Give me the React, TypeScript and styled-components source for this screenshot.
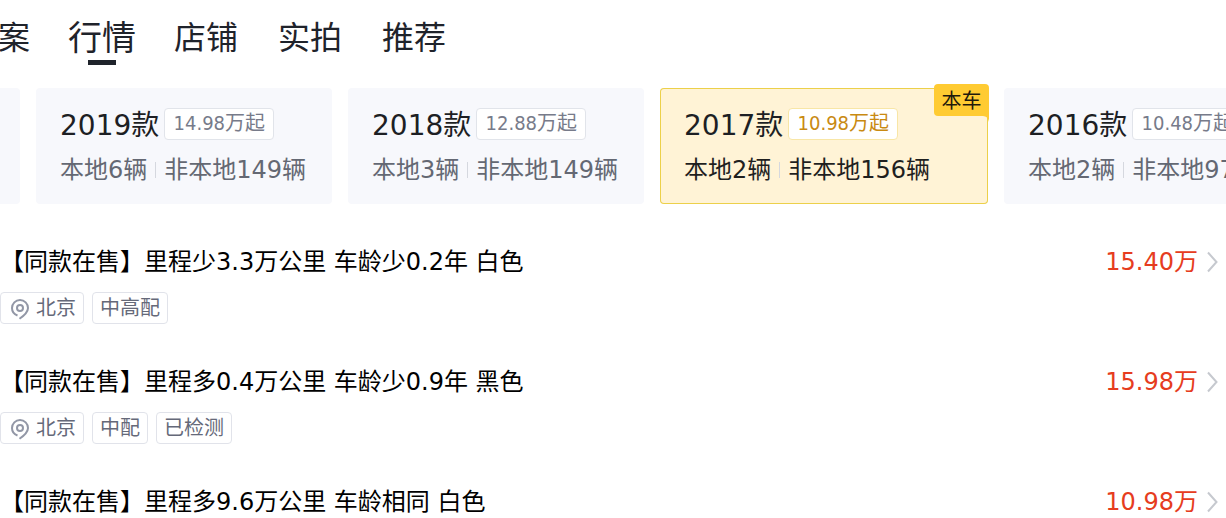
import React from "react";
import styled, { createGlobalStyle } from "styled-components";

const GlobalStyle = createGlobalStyle`
  * { box-sizing: border-box; }
  body {
    margin: 0;
    background: #fff;
    color: #000;
    font-family: "DejaVu Sans", "Noto Sans CJK SC", sans-serif;
    overflow: hidden;
  }
  button { font-family: inherit; border: 0; background: none; padding: 0; cursor: pointer; }
`;

const Page = styled.main`
  width: 100%;
  overflow: hidden;
`;

const Tabs = styled.nav`
  display: flex;
  gap: 40px;
  height: 84px;
  padding-top: 16px;
  margin-left: -2px;
`;

const Tab = styled.button<{ $active?: boolean }>`
  display: flex;
  flex-direction: column;
  align-items: center;
  flex: none;
  height: 52px;
  margin: ${(p) => (p.$active ? "0 -2px" : "0")};
  color: #1f232b;
  font-size: ${(p) => (p.$active ? 34 : 32)}px;
  line-height: 44px;
  white-space: nowrap;

  &::after {
    content: "";
    display: ${(p) => (p.$active ? "block" : "none")};
    width: 28px;
    height: 5px;
    background: #1f232b;
  }
`;

const Years = styled.section`
  display: flex;
  gap: 16px;
  padding-top: 4px;
  overflow: hidden;
`;

const PreviousYear = styled.div`
  flex: 0 0 20px;
  border-radius: 0 4px 4px 0;
  background: #f7f8fc;
`;

const YearCard = styled.button<{ $current?: boolean }>`
  position: relative;
  flex: 0 0 ${(p) => (p.$current ? 328 : 296)}px;
  height: 116px;
  padding: 2px 24px 0;
  border-radius: 4px;
  background: ${(p) => (p.$current ? "#fff3d6" : "#f7f8fc")};
  box-shadow: ${(p) => (p.$current ? "inset 0 0 0 1px #ecd04a" : "none")};
  color: ${(p) => (p.$current ? "#1f1f1f" : "#646873")};
  text-align: left;
  white-space: nowrap;
`;

const YearHead = styled.div`
  display: flex;
  align-items: flex-start;
  gap: 5px;
  height: 36px;
  color: #1d1f24;
  font-size: 28px;
  line-height: 36px;
`;

const FromPrice = styled.span<{ $current?: boolean }>`
  display: flex;
  justify-content: center;
  width: 110px;
  height: 32px;
  border: 1px solid ${(p) => (p.$current ? "#f8e6a6" : "#e1e4ea")};
  border-radius: 4px;
  background: #fff;
  color: ${(p) => (p.$current ? "#c98a12" : "#777b8a")};
  font-family: "DejaVu Sans Condensed", "DejaVu Sans", "Noto Sans CJK SC", sans-serif;
  font-size: 20px;
  line-height: 28px;
`;

const Counts = styled.div`
  display: flex;
  align-items: center;
  height: 32px;
  margin-top: 10px;
  font-size: 24px;
  line-height: 32px;
`;

const Divider = styled.i`
  width: 1px;
  height: 16px;
  margin: 0 8px;
  background: #d5d8df;
`;

const CurrentBadge = styled.span`
  position: absolute;
  top: -4px;
  right: -1px;
  width: 55px;
  height: 32px;
  border-radius: 4px 4px 0 4px;
  background: #ffcb32;
  color: #1f1a0c;
  font-size: 20px;
  line-height: 34px;
  text-align: center;
`;

const BadgeTail = styled.svg`
  position: absolute;
  top: 32px;
  right: 0;
`;

const Listings = styled.ul`
  margin: 0;
  padding: 38px 0 0;
  list-style: none;
`;

const Listing = styled.li`
  & + & {
    margin-top: 38px;
  }
`;

const ListingLink = styled.a`
  display: flex;
  align-items: center;
  height: 40px;
  padding-right: 8px;
  color: #000;
  font-size: 24px;
  line-height: 40px;
  text-decoration: none;
  white-space: nowrap;
`;

const Price = styled.span`
  margin-left: auto;
  margin-right: 8px;
  color: #e63c20;
`;

const Tags = styled.div`
  display: flex;
  gap: 8px;
  margin-top: 10px;
`;

const Tag = styled.span`
  display: flex;
  align-items: flex-start;
  height: 32px;
  padding: 0 7px;
  border: 1px solid #e1e3ea;
  border-radius: 4px;
  color: #656979;
  font-size: 20px;
  line-height: 30px;
`;

const PinIcon = styled.svg`
  flex: none;
  margin-top: 4px;
  margin-right: 4px;
`;

const Pin = () => (
  <PinIcon width="24" height="24" viewBox="0 0 24 24" fill="none" stroke="#9297a6" strokeWidth="2" aria-hidden="true">
    <path d="M9.500 18.500C6 17.200 4 14.500 4 11a8 8 0 0 1 16 0c0 4.200-3 7-8.500 10.800" />
    <circle cx="12" cy="11" r="3" />
  </PinIcon>
);

const Chevron = () => (
  <svg width="12" height="24" viewBox="0 0 12 24" fill="none" stroke="#c6c9cf" strokeWidth="2" aria-hidden="true">
    <path d="M2 2.500L10.500 12L2 21.500" />
  </svg>
);

const tabs = ["案", "行情", "店铺", "实拍", "推荐"];

const years = [
  { year: 2019, from: "14.98", local: 6, other: 149 },
  { year: 2018, from: "12.88", local: 3, other: 149 },
  { year: 2017, from: "10.98", local: 2, other: 156, current: true },
  { year: 2016, from: "10.48", local: 2, other: 97 },
];

const listings = [
  { title: "里程少3.3万公里 车龄少0.2年 白色", price: "15.40", tags: ["中高配"] },
  { title: "里程多0.4万公里 车龄少0.9年 黑色", price: "15.98", tags: ["中配", "已检测"] },
  { title: "里程多9.6万公里 车龄相同 白色", price: "10.98", tags: [] },
];

export default function App() {
  return (
    <Page>
      <GlobalStyle />
      <Tabs>
        {tabs.map((t) => (
          <Tab key={t} type="button" $active={t === "行情"}>{t}</Tab>
        ))}
      </Tabs>
      <Years>
        <PreviousYear />
        {years.map((y) => (
          <YearCard key={y.year} type="button" $current={y.current}>
            <YearHead>
              {y.year}款
              <FromPrice $current={y.current}>{y.from}万起</FromPrice>
            </YearHead>
            <Counts>
              <span>本地{y.local}辆</span>
              <Divider />
              <span>非本地{y.other}辆</span>
            </Counts>
            {y.current && (
              <CurrentBadge>
                本车
                <BadgeTail width="6" height="6" viewBox="0 0 6 6" aria-hidden="true">
                  <path d="M0 0H6V6Q5 0 0 0Z" fill="#ffcb32" />
                </BadgeTail>
              </CurrentBadge>
            )}
          </YearCard>
        ))}
      </Years>
      <Listings>
        {listings.map((l) => (
          <Listing key={l.title}>
            <ListingLink href="#">
              <span>【同款在售】{l.title}</span>
              <Price>{l.price}万</Price>
              <Chevron />
            </ListingLink>
            {l.tags.length > 0 && (
              <Tags>
                <Tag><Pin />北京</Tag>
                {l.tags.map((t) => <Tag key={t}>{t}</Tag>)}
              </Tags>
            )}
          </Listing>
        ))}
      </Listings>
    </Page>
  );
}
